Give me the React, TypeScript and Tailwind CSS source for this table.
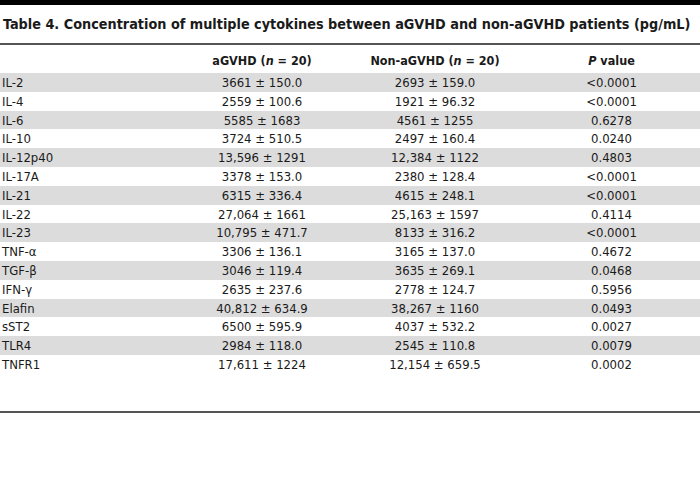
import React from 'react';

type Row = { name: string; a: string; b: string; p: string };

const rows: Row[] = [
    { name: 'IL-2', a: '3661 ± 150.0', b: '2693 ± 159.0', p: '<0.0001' },
    { name: 'IL-4', a: '2559 ± 100.6', b: '1921 ± 96.32', p: '<0.0001' },
    { name: 'IL-6', a: '5585 ± 1683', b: '4561 ± 1255', p: '0.6278' },
    { name: 'IL-10', a: '3724 ± 510.5', b: '2497 ± 160.4', p: '0.0240' },
    { name: 'IL-12p40', a: '13,596 ± 1291', b: '12,384 ± 1122', p: '0.4803' },
    { name: 'IL-17A', a: '3378 ± 153.0', b: '2380 ± 128.4', p: '<0.0001' },
    { name: 'IL-21', a: '6315 ± 336.4', b: '4615 ± 248.1', p: '<0.0001' },
    { name: 'IL-22', a: '27,064 ± 1661', b: '25,163 ± 1597', p: '0.4114' },
    { name: 'IL-23', a: '10,795 ± 471.7', b: '8133 ± 316.2', p: '<0.0001' },
    { name: 'TNF-α', a: '3306 ± 136.1', b: '3165 ± 137.0', p: '0.4672' },
    { name: 'TGF-β', a: '3046 ± 119.4', b: '3635 ± 269.1', p: '0.0468' },
    { name: 'IFN-γ', a: '2635 ± 237.6', b: '2778 ± 124.7', p: '0.5956' },
    { name: 'Elafin', a: '40,812 ± 634.9', b: '38,267 ± 1160', p: '0.0493' },
    { name: 'sST2', a: '6500 ± 595.9', b: '4037 ± 532.2', p: '0.0027' },
    { name: 'TLR4', a: '2984 ± 118.0', b: '2545 ± 110.8', p: '0.0079' },
    { name: 'TNFR1', a: '17,611 ± 1224', b: '12,154 ± 659.5', p: '0.0002' },
];

const grid = 'grid grid-cols-[177px_170px_176px_177px] items-center';

const App: React.FC = () => {
    return (
        <div className="w-[700px] h-[484px] bg-white text-[#1a1a1a] font-['DejaVu_Sans_Condensed','DejaVu_Sans',sans-serif] overflow-hidden">
            <div className="h-[5px] bg-black" />
            <h1 className="pl-[3px] pt-[9px] h-[38px] text-[14.3px] font-bold leading-[20px] whitespace-nowrap">
                Table 4. Concentration of multiple cytokines between aGVHD and non-aGVHD patients (pg/mL)
            </h1>
            <div className="h-[2px] bg-[#555]" />
            <div className={`${grid} h-[28px] pt-[5px] text-[12.5px] font-bold`}>
                <div />
                <div className="text-center">aGVHD (<i>n</i> = 20)</div>
                <div className="text-center">Non-aGVHD (<i>n</i> = 20)</div>
                <div className="text-center"><i>P</i> value</div>
            </div>
            <div className="text-[13px]">
                {rows.map((r, i) => (
                    <div key={r.name} className={`${grid} h-[18.8px] ${i % 2 === 0 ? 'bg-[#dcdcdc]' : 'bg-white'}`}>
                        <div className="pl-[2px]">{r.name}</div>
                        <div className="text-center">{r.a}</div>
                        <div className="text-center">{r.b}</div>
                        <div className="text-center">{r.p}</div>
                    </div>
                ))}
            </div>
            <div className="h-[37px]" />
            <div className="h-[2px] bg-[#555]" />
        </div>
    );
};

export default App;
